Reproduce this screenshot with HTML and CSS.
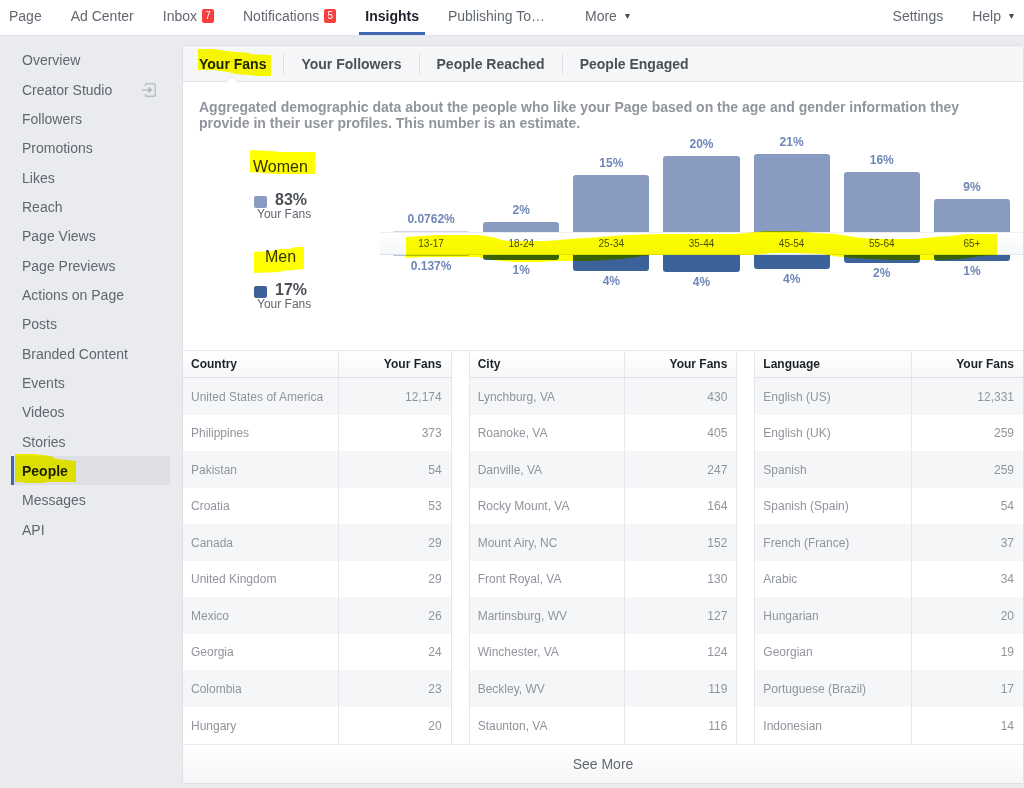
FILE: index.html
```
<!DOCTYPE html>
<html lang="en">
<head>
<meta charset="utf-8">
<title>Insights - People</title>
<link rel="stylesheet" href="styles.css">
</head>
<body>
<header class="topbar">
  <nav class="topnav" aria-label="Page">
    <a href="#">Page</a>
    <a href="#">Ad Center</a>
    <a href="#">Inbox <span class="badge">7</span></a>
    <a href="#">Notifications <span class="badge">5</span></a>
    <a href="#" class="current">Insights</a>
    <a href="#">Publishing To…</a>
    <a href="#" class="more">More <svg class="caret" viewBox="0 0 5 5"><path d="M0 0h5L2.5 5z"/></svg></a>
  </nav>
  <nav class="topnav end" aria-label="Settings">
    <a href="#">Settings</a>
    <a href="#">Help <svg class="caret" viewBox="0 0 5 5"><path d="M0 0h5L2.5 5z"/></svg></a>
  </nav>
</header>

<div class="layout">
  <nav class="sidebar" aria-label="Insights">
    <a href="#">Overview</a>
    <a href="#">Creator Studio
      <svg class="exit" viewBox="0 0 14 14"><path d="M3.5 3V1.5Q3.500 .7 4.300 .7H12Q13.300 .7 13.300 2V12Q13.300 13.300 12 13.300H4.300Q3.500 13.300 3.500 12.500V11M0 7H8.500" fill="none" stroke="#b9bdc4" stroke-width="1.400"/><path d="M6.500 3.500L10.500 7L6.500 10.500z" fill="#b0b4bb"/></svg></a>
    <a href="#">Followers</a>
    <a href="#">Promotions</a>
    <a href="#">Likes</a>
    <a href="#">Reach</a>
    <a href="#">Page Views</a>
    <a href="#">Page Previews</a>
    <a href="#">Actions on Page</a>
    <a href="#">Posts</a>
    <a href="#">Branded Content</a>
    <a href="#">Events</a>
    <a href="#">Videos</a>
    <a href="#">Stories</a>
    <a href="#" class="selected">People
      <svg class="mark mark-people" viewBox="0 0 62 30"><path d="M1 0H20L37 2L42 5L62 7V28H32L30 29L10 29L8 28H1z"/></svg></a>
    <a href="#">Messages</a>
    <a href="#">API</a>
  </nav>

  <main class="panel">
    <nav class="tabs" aria-label="Audience">
      <a href="#" class="active">Your Fans
        <svg class="mark mark-tab" viewBox="0 0 73 28"><path d="M0 0H16L28 2L52 4V5L73 6V27H60L50 26L38 25L30 23L15 21H0z"/></svg>
        <svg class="notch" viewBox="0 0 14 7"><path d="M0 7L7 0L14 7z" fill="#fff"/><path d="M0 6.500L7 .5L14 6.500" fill="none" stroke="#e6e8eb"/></svg></a>
      <a href="#">Your Followers</a>
      <a href="#">People Reached</a>
      <a href="#">People Engaged</a>
    </nav>

    <section class="demographics">
      <p class="intro">Aggregated demographic data about the people who like your Page based on the age and gender information they provide in their user profiles. This number is an estimate.</p>
      <div class="chart">
        <div class="legend">
          <div class="group">
            <h2>Women<svg class="mark mark-women" viewBox="0 0 65 24"><path d="M0 0L20 1L30 2H65V24H25L0 22z"/></svg></h2>
            <div class="share"><i class="swatch women"></i><b>83%</b></div>
            <span class="caption">Your Fans</span>
          </div>
          <div class="group men-group">
            <h2>Men<svg class="mark mark-men" viewBox="0 0 50 26"><path d="M0 5L18 4L26 2H35L42 0H50V22L28 24L26 25L0 26z"/></svg></h2>
            <div class="share"><i class="swatch men"></i><b>17%</b></div>
            <span class="caption">Your Fans</span>
          </div>
        </div>
        <div class="plot">
          <div class="row up">
            <div><span>0.0762%</span><i class="sliver" style="height:1px"></i></div>
            <div><span>2%</span><i style="height:10px"></i></div>
            <div><span>15%</span><i style="height:57px"></i></div>
            <div><span>20%</span><i style="height:76px"></i></div>
            <div><span>21%</span><i style="height:78px"></i></div>
            <div><span>16%</span><i style="height:60px"></i></div>
            <div><span>9%</span><i style="height:33px"></i></div>
          </div>
          <div class="row ages">
            <span>13-17</span><span>18-24</span><span>25-34</span><span>35-44</span><span>45-54</span><span>55-64</span><span>65+</span>
          </div>
          <div class="row down">
            <div><i class="sliver" style="height:1px"></i><span>0.137%</span></div>
            <div><i style="height:5px"></i><span>1%</span></div>
            <div><i style="height:16px"></i><span>4%</span></div>
            <div><i style="height:17px"></i><span>4%</span></div>
            <div><i style="height:14px"></i><span>4%</span></div>
            <div><i style="height:8px"></i><span>2%</span></div>
            <div><i style="height:6px"></i><span>1%</span></div>
          </div>
          <svg class="mark mark-ages" viewBox="0 0 592 32" preserveAspectRatio="none"><path d="M0 6L30 4H72L86 6L96 9L102 10H140L165 8L195 6L220 4L255 3H330L360 0H390L410 2L430 3L455 7L480 8H510L530 6L545 5L560 3H592V24L575 25L555 28L535 29H490L465 28L435 26L415 23L390 22H370L345 24H245L215 28L185 30H150L135 31H110L95 30L80 28L72 26H20L0 27z"/></svg>
        </div>
      </div>
    </section>

    <section class="tables">
      <table>
        <thead><tr><th>Country</th><th>Your Fans</th></tr></thead>
        <tbody>
          <tr><td>United States of America</td><td>12,174</td></tr>
          <tr><td>Philippines</td><td>373</td></tr>
          <tr><td>Pakistan</td><td>54</td></tr>
          <tr><td>Croatia</td><td>53</td></tr>
          <tr><td>Canada</td><td>29</td></tr>
          <tr><td>United Kingdom</td><td>29</td></tr>
          <tr><td>Mexico</td><td>26</td></tr>
          <tr><td>Georgia</td><td>24</td></tr>
          <tr><td>Colombia</td><td>23</td></tr>
          <tr><td>Hungary</td><td>20</td></tr>
        </tbody>
      </table>
      <table>
        <thead><tr><th>City</th><th>Your Fans</th></tr></thead>
        <tbody>
          <tr><td>Lynchburg, VA</td><td>430</td></tr>
          <tr><td>Roanoke, VA</td><td>405</td></tr>
          <tr><td>Danville, VA</td><td>247</td></tr>
          <tr><td>Rocky Mount, VA</td><td>164</td></tr>
          <tr><td>Mount Airy, NC</td><td>152</td></tr>
          <tr><td>Front Royal, VA</td><td>130</td></tr>
          <tr><td>Martinsburg, WV</td><td>127</td></tr>
          <tr><td>Winchester, VA</td><td>124</td></tr>
          <tr><td>Beckley, WV</td><td>119</td></tr>
          <tr><td>Staunton, VA</td><td>116</td></tr>
        </tbody>
      </table>
      <table>
        <thead><tr><th>Language</th><th>Your Fans</th></tr></thead>
        <tbody>
          <tr><td>English (US)</td><td>12,331</td></tr>
          <tr><td>English (UK)</td><td>259</td></tr>
          <tr><td>Spanish</td><td>259</td></tr>
          <tr><td>Spanish (Spain)</td><td>54</td></tr>
          <tr><td>French (France)</td><td>37</td></tr>
          <tr><td>Arabic</td><td>34</td></tr>
          <tr><td>Hungarian</td><td>20</td></tr>
          <tr><td>Georgian</td><td>19</td></tr>
          <tr><td>Portuguese (Brazil)</td><td>17</td></tr>
          <tr><td>Indonesian</td><td>14</td></tr>
        </tbody>
      </table>
    </section>
    <button type="button" class="see-more">See More</button>
  </main>
</div>
</body>
</html>
```
FILE: styles.css
```
* { box-sizing: border-box; }
body {
  margin: 0;
  background: #e9ebee;
  color: #616770;
  font: 14px/16px "Liberation Sans", Arial, sans-serif;
}
a { color: inherit; text-decoration: none; }

.mark {
  position: absolute;
  fill: #ff0;
  mix-blend-mode: multiply;
  pointer-events: none;
}

/* Top navigation */
.topbar {
  display: flex;
  justify-content: space-between;
  height: 36px;
  padding: 0 4px 0 3px;
  background: #fff;
  border-bottom: 1px solid #e1e3e8;
  white-space: nowrap;
}
.topnav { display: flex; gap: 17px; }
.topnav a {
  display: flex;
  align-items: center;
  gap: 5px;
  padding: 0 6px;
  height: 35px;
  border-top: 2px solid transparent;
  border-bottom: 5px solid transparent;
}
.topnav .current {
  color: #1d2129;
  font-weight: bold;
  border-top-width: 0;
  border-bottom: 3px solid #4267b2;
}
.topnav .more { margin-left: 11px; }
.badge {
  width: 12px;
  border-radius: 2px;
  background: #fa3e3e;
  color: #fff;
  font-size: 10px;
  line-height: 14px;
  text-align: center;
}
.caret { width: 5px; height: 5px; margin-left: 3px; fill: #444950; }

/* Page layout */
.layout { display: flex; }
.sidebar {
  flex: none;
  width: 170px;
  margin-right: 12px;
  padding: 9px 0 0 11px;
}
.sidebar a {
  position: relative;
  display: flex;
  align-items: center;
  justify-content: space-between;
  height: 29px;
  padding: 0 14px 0 8px;
  border-left: 3px solid transparent;
}
.sidebar a:nth-child(3n+1) { height: 30px; }
.sidebar .selected {
  background: #dddfe2;
  border-left-color: #4267b2;
  color: #1d2129;
  font-weight: bold;
}
.exit { width: 14px; height: 14px; }
.mark-people { left: 0; top: -2px; width: 62px; height: 30px; }

.panel {
  flex: 1;
  min-width: 0;
  margin: 9px 0 4px;
  background: #fff;
  border: 1px solid #dddfe2;
  border-radius: 3px;
}

/* Tabs */
.tabs {
  display: flex;
  align-items: center;
  height: 36px;
  background: #f5f6f7;
  border-bottom: 1px solid #e3e5e8;
  color: #4b4f56;
  font-weight: bold;
}
.tabs a {
  position: relative;
  padding: 2px 17px;
  border-left: 1px solid #dddfe2;
}
.tabs .active { padding-left: 15px; border-left-color: transparent; color: #1d2129; }
.mark-tab { left: 14px; top: -5px; width: 73px; height: 28px; }
.notch { position: absolute; left: 41px; top: 22px; width: 14px; height: 7px; }

/* Demographics */
.demographics { height: 268px; padding: 17px 0 0; }
.intro {
  margin: 0;
  padding: 0 16px;
  color: #90949c;
  font-size: 14px;
  font-weight: bold;
}
.chart { display: flex; }
.legend { flex: none; width: 197px; padding: 26px 0 0 70px; }
.group h2 {
  position: relative;
  margin: 0;
  font-size: 16px;
  line-height: 20px;
  font-weight: normal;
  color: #333;
}
.men-group { margin-top: 27px; }
.men-group h2 { padding-left: 12px; }
.share { display: flex; align-items: center; gap: 8px; margin: 15px 0 0 1px; color: #4b4f56; font-size: 16px; }
.men-group .share { margin-top: 15px; }
.swatch { width: 13px; height: 12px; margin-top: 4px; border-radius: 2px; }
.women { background: #899bc1; }
.men { background: #3b6299; }
.caption { display: block; margin-left: 4px; font-size: 12px; line-height: 12px; }
.mark-women { left: -3px; top: -7px; width: 65px; height: 24px; }
.mark-men { left: 1px; top: 0; width: 50px; height: 26px; }

.plot { position: relative; flex: 1; min-width: 0; }
.row {
  display: grid;
  grid-template-columns: repeat(7, 1fr);
  gap: 14px;
  padding: 0 13px;
  text-align: center;
}
.row i { display: block; }
.up { align-items: end; height: 101px; color: #6f87b8; font-size: 12px; font-weight: bold; }
.up span { display: block; margin-bottom: 4px; }
.up i { background: #899bc1; border-radius: 3px 3px 0 0; }
.ages {
  height: 23px;
  border-top: 1px solid #eceef1;
  border-bottom: 1px solid #dfe2e7;
  background: linear-gradient(#fff, #f6f7f8);
  font-size: 10px;
  line-height: 22px;
  color: #4b4f56;
}
.down { color: #6f87b8; font-size: 12px; font-weight: bold; }
.down i { margin-bottom: 2px; background: #3b6299; border-radius: 0 0 3px 3px; }
.row .sliver { opacity: .4; }
.mark-ages { left: 4%; top: 100px; width: 92%; height: 32px; }

/* Tables */
.tables {
  display: grid;
  grid-template-columns: repeat(3, 1fr);
  gap: 17px;
  border-top: 1px solid #e5e7ea;
  border-bottom: 1px solid #e5e7ea;
}
table {
  width: 100%;
  table-layout: fixed;
  border-spacing: 0;
  border: solid #e5e7ea;
  border-width: 0 1px;
  font-size: 12px;
  color: #90949c;
}
table:first-child { border-left: 0; }
table:last-child { border-right: 0; }
th, td { padding: 0 8px; height: 36px; text-align: left; }
tr:nth-child(odd) td { height: 37px; background: #f5f6f7; }
tr:last-child td { height: 37px; }
tr th {
  height: 27px;
  border-bottom: 1px solid #dddfe2;
  background: linear-gradient(#fff, #f6f7f8);
  color: #1d2129;
}
th:first-child { width: 58%; }
th:last-child, td:last-child { padding-right: 9px; border-left: 1px solid #e5e7ea; text-align: right; }

.see-more {
  display: block;
  width: 100%;
  height: 38px;
  border: 0;
  border-radius: 0 0 3px 3px;
  background: linear-gradient(#fff, #f5f6f7);
  color: #616770;
  font: inherit;
}
```
